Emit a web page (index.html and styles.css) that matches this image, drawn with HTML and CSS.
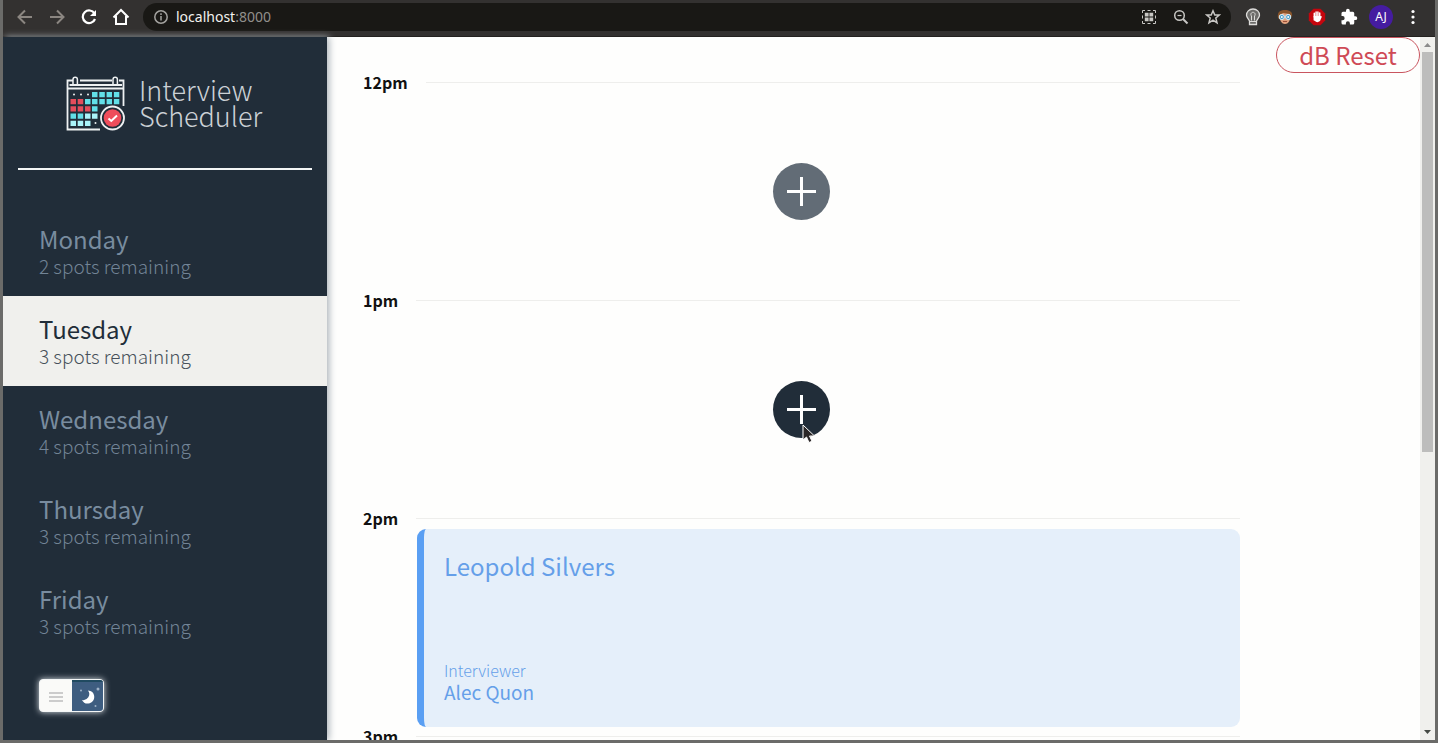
FILE: index.html
```
<!DOCTYPE html>
<html lang="en">
<head>
<meta charset="utf-8">
<title>Interview Scheduler</title>
<link rel="stylesheet" href="styles.css">
</head>
<body class="window">
<header class="toolbar">
  <button class="tool dim" aria-label="Back"><svg width="16" height="16" viewBox="0 0 16 16" fill="none" stroke="currentColor" stroke-width="2"><path d="M15 8H2M8 1.500L1.500 8L8 14.500"/></svg></button>
  <button class="tool dim" aria-label="Forward"><svg width="16" height="16" viewBox="0 0 16 16" fill="none" stroke="currentColor" stroke-width="2"><path d="M1 8H14M8 1.500L14.500 8L8 14.500"/></svg></button>
  <button class="tool" aria-label="Reload"><svg width="16" height="16" viewBox="0 0 16 16"><path d="M13.500 4.500A6.300 6.300 0 1 0 14 10" fill="none" stroke="currentColor" stroke-width="2.200"/><path d="M15 1V7H9Z" fill="currentColor"/></svg></button>
  <button class="tool" aria-label="Home"><svg width="18" height="18" viewBox="0 0 18 18" fill="none" stroke="currentColor" stroke-width="2"><path d="M1.500 9.500L9 2L16.500 9.500M4 8V16H14V8"/></svg></button>
  <div class="address">
    <svg width="14" height="14" viewBox="0 0 14 14" fill="none" stroke="#a3a29f" stroke-width="1.500"><circle cx="7" cy="7" r="6.200"/><path d="M7 6V10.500M7 3.300V5"/></svg>
    <p class="url">localhost<span class="port">:8000</span></p>
    <button class="tool pale" aria-label="Apps"><svg width="16" height="16" viewBox="0 0 16 16"><path d="M1.500 4V1.500H4M6.500 1.500H9.500M12 1.500H14.500V4M14.500 6.500V9.500M14.500 12V14.500H12M9.500 14.500H6.500M4 14.500H1.500V12M1.500 9.500V6.500" fill="none" stroke="currentColor"/><path d="M3.800 3.800H7.600V7.600H3.800ZM8.400 3.800H12.200V7.600H8.400ZM3.800 8.400H7.600V12.200H3.800ZM8.400 8.400H12.200V12.200H8.400Z" fill="currentColor"/></svg></button>
    <button class="tool pale" aria-label="Zoom"><svg width="16" height="16" viewBox="0 0 16 16" fill="none" stroke="currentColor"><circle cx="6.500" cy="6.500" r="4.800" stroke-width="1.500"/><path d="M10 10L14.500 14.500" stroke-width="2"/><path d="M4.500 6.500H8.500" stroke-width="1.200"/></svg></button>
    <button class="tool pale" aria-label="Bookmark"><svg width="16" height="16" viewBox="0 0 16 16" fill="none" stroke="currentColor" stroke-width="1.500"><path d="M8 1.800L9.800 6H14.300L10.800 9L12 13.800L8 11.200L4 13.800L5.200 9L1.700 6H6.200Z"/></svg></button>
  </div>
  <button class="tool" aria-label="Lightbulb"><svg width="16" height="18" viewBox="0 0 16 18"><path d="M8 1C4 1 1.500 4 1.500 7.200C1.500 9.500 4 11.200 4.500 13V16.500H11.500V13C12 11.200 14.500 9.500 14.500 7.200C14.500 4 12 1 8 1Z" fill="#6d6c6a" stroke="#dddcda" stroke-width="1.300"/><path d="M6.500 12.500V8C5 6 6.500 4.300 8 4.300S11 6 9.500 8V12.500M4.500 13.500H11.500" fill="none" stroke="#dddcda"/></svg></button>
  <button class="tool" aria-label="Avatar"><svg width="16" height="16" viewBox="0 0 16 16"><path d="M2.500 7C2.500 10 4 15 8 15S13.500 10 13.500 7V4H2.500Z" fill="#dfa17e"/><path d="M1 9C0 3 3 1 8 1S16 3 15 8L12.500 5L6 4L3 6V11Z" fill="#8a552b"/><circle cx="4.800" cy="8" r="2.600" fill="#4f9fc9" stroke="#d9f1fb"/><circle cx="11.200" cy="8" r="2.600" fill="#4f9fc9" stroke="#d9f1fb"/><circle cx="4.800" cy="8" r="1" fill="#fff"/><circle cx="11.200" cy="8" r="1" fill="#fff"/><path d="M6 12.500H10" stroke="#9b4e37"/></svg></button>
  <button class="tool" aria-label="Blocker"><svg width="18" height="18" viewBox="0 0 18 18"><path d="M5.500 .800H12.500L17.200 5.500V12.500L12.500 17.200H5.500L.800 12.500V5.500Z" fill="#c5060e"/><path d="M6.300 12V5.300M8.100 9V3.900M9.900 9V3.900M11.700 10V5" stroke="#fff" stroke-width="1.500" stroke-linecap="round"/><path d="M5.500 8H12.400L14 8.500L12 13Q9 15.500 6.500 12.500Z" fill="#fff"/></svg></button>
  <button class="tool" aria-label="Extensions"><svg width="18" height="18" viewBox="0 0 24 24"><path fill="currentColor" d="M20.500 11H19V7a2 2 0 0 0-2-2h-4V3.500a2.500 2.500 0 0 0-5 0V5H4a2 2 0 0 0-2 2v3.800h1.500a2.700 2.700 0 0 1 0 5.400H2V20a2 2 0 0 0 2 2h3.800v-1.500a2.700 2.700 0 0 1 5.400 0V22H17a2 2 0 0 0 2-2v-4h1.500a2.500 2.500 0 0 0 0-5Z"/></svg></button>
  <button class="tool profile">AJ</button>
  <button class="tool" aria-label="Menu"><svg width="4" height="16" viewBox="0 0 4 16" fill="currentColor"><circle cx="2" cy="2.500" r="1.600"/><circle cx="2" cy="8" r="1.600"/><circle cx="2" cy="13.500" r="1.600"/></svg></button>
</header>
<div class="page">
  <aside class="sidebar">
    <div class="brand">
      <svg width="60" height="56" viewBox="0 0 60 56">
        <g fill="none" stroke="#eef1f2" stroke-width="1.800">
          <path d="M7 4.500H1.500V53.500H34M14 4.500H46M53 4.500H57.500V30M1.500 12.500H57.500M3.500 9H56"/>
          <path d="M7 8V3.500A2.200 2.200 0 0 1 11.400 3.500V8M47 8V3.500A2.200 2.200 0 0 1 51.400 3.500V8" stroke-width="1.500"/>
        </g>
        <g fill="#eef1f2"><circle cx="8" cy="18.500" r="1"/><circle cx="15" cy="18.500" r="1"/><circle cx="22" cy="18.500" r="1"/><circle cx="29.500" cy="47" r="1"/></g>
        <path d="M26 16H31.500V21.200H26ZM33.300 16H38.800V21.200H33.300ZM40.600 16H46V21.200H40.600ZM47.900 16H53.300V21.200H47.900ZM19 23H24.500V28.200H19ZM26 23H31.500V28.200H26ZM33.300 23H38.800V28.200H33.300ZM40.600 23H46V28.200H40.600ZM47.900 23H53.300V28.200H47.900ZM26 30.200H31.500V35.500H26ZM4.500 37.500H10V42.800H4.500ZM11.700 37.500H17.200V42.800H11.700Z" fill="#62dfe8"/>
        <path d="M4.500 23H10V28.200H4.500ZM11.700 23H17.200V28.200H11.700ZM4.500 30.200H10V35.500H4.500ZM11.700 30.200H17.200V35.500H11.700ZM19 30.200H24.500V35.500H19Z" fill="#e44d5c"/>
        <path d="M19 37.500H24.500V42.800H19ZM26 37.500H31.500V42.800H26ZM4.500 44.700H10V50H4.500ZM11.700 44.700H17.200V50H11.700ZM19 44.700H24.500V50H19Z" fill="#aaf4fa"/>
        <circle cx="46.500" cy="42" r="11.500" fill="#212d39" stroke="#eef1f2" stroke-width="1.800"/><circle cx="46.500" cy="42" r="8.800" fill="#ee4d5b"/>
        <path d="M42.500 42.500L45.300 45L51 39.500" fill="none" stroke="#fff" stroke-width="2"/>
      </svg>
      <p class="brand-name">Interview<br>Scheduler</p>
    </div>
    <hr class="divider">
    <nav class="days">
      <a class="day" href="#"><span class="day-name">Monday</span><span class="spots">2 spots remaining</span></a>
      <a class="day selected" href="#"><span class="day-name">Tuesday</span><span class="spots">3 spots remaining</span></a>
      <a class="day" href="#"><span class="day-name">Wednesday</span><span class="spots">4 spots remaining</span></a>
      <a class="day" href="#"><span class="day-name">Thursday</span><span class="spots">3 spots remaining</span></a>
      <a class="day" href="#"><span class="day-name">Friday</span><span class="spots">3 spots remaining</span></a>
    </nav>
    <button class="theme" aria-label="Night mode">
      <span class="grip"><svg width="14" height="12" viewBox="0 0 14 12" stroke="#bdbdbd" stroke-width="1.300"><path d="M0 2H14M0 6H14M0 10H14"/></svg></span>
      <span class="night"><svg width="28" height="28" viewBox="0 0 28 28"><path d="M14 7.500A6.500 6.500 0 1 1 8 17A6 6 0 0 0 14 7.500Z" fill="#fff"/><g fill="#9fb2c7"><circle cx="24" cy="6" r="1.500"/><circle cx="7" cy="7.500" r="1"/><circle cx="21.500" cy="23" r="1"/></g></svg></span>
    </button>
  </aside>
  <main class="main">
    <section class="schedule">
      <article class="slot">
        <header class="hour"><h4 class="time">12pm</h4><hr class="rule"></header>
        <div class="empty"><button class="add" aria-label="Add appointment"><svg width="29" height="29" viewBox="0 0 29 29" stroke="#fff" stroke-width="3"><path d="M14.500 0V29M0 14.500H29"/></svg></button></div>
      </article>
      <article class="slot">
        <header class="hour"><h4 class="time">1pm</h4><hr class="rule"></header>
        <div class="empty"><button class="add active" aria-label="Add appointment"><svg width="29" height="29" viewBox="0 0 29 29" stroke="#fff" stroke-width="3"><path d="M14.500 0V29M0 14.500H29"/></svg><svg class="pointer" width="14" height="20" viewBox="0 0 14 20"><path d="M1 1V16L4.500 13L7 18.500L10 17.200L7.500 12H12.500Z" fill="#2a2626" stroke="#fff"/></svg></button></div>
      </article>
      <article class="slot">
        <header class="hour"><h4 class="time">2pm</h4><hr class="rule"></header>
        <div class="card">
          <h2 class="student">Leopold Silvers</h2>
          <div><h4 class="label">Interviewer</h4><h3 class="interviewer">Alec Quon</h3></div>
        </div>
      </article>
      <article class="slot">
        <header class="hour"><h4 class="time">3pm</h4><hr class="rule"></header>
      </article>
    </section>
    <button class="reset">dB Reset</button>
  </main>
  <div class="scrollbar">
    <svg width="15" height="15" viewBox="0 0 15 15"><path d="M4 10H11L7.500 6Z" fill="#8b8b8b"/></svg>
    <div class="thumb"></div>
    <svg width="15" height="15" viewBox="0 0 15 15"><path d="M4 5H11L7.500 9Z" fill="#454a45"/></svg>
  </div>
</div>
</body>
</html>
```
FILE: styles.css
```
* { box-sizing: border-box; margin: 0; padding: 0; }

.window {
  display: flex;
  flex-direction: column;
  height: 100vh;
  overflow: hidden;
  border: solid #6b6b69;
  border-width: 0 3px 3px;
  background: #fefefd;
  font-family: "Noto Sans CJK SC", "Noto Sans", sans-serif;
}

button { border: 0; background: none; font: inherit; cursor: pointer; }
svg { display: block; }

.toolbar {
  display: flex;
  flex: none;
  align-items: center;
  gap: 8px;
  height: 37px;
  padding: 0 10px 3px;
  background: #333130;
  border-bottom: 1px solid #242220;
}

.tool {
  display: flex;
  flex: none;
  align-items: center;
  justify-content: center;
  width: 24px;
  height: 24px;
  color: #fff;
}
.dim { color: #8b8681; }
.pale { color: #c8c7c4; }

.address {
  display: flex;
  flex: 1;
  align-items: center;
  gap: 8px;
  height: 28px;
  margin-left: 2px;
  margin-right: 2px;
  padding: 0 6px 0 11px;
  border-radius: 14px;
  background: #191815;
}
.url {
  flex: 1;
  color: #f2f1ef;
  font: 14px/20px "Noto Sans", sans-serif;
}
.port { color: #918f8b; }

.profile {
  border-radius: 50%;
  background: #451ca0;
  font: 12px/24px "Noto Sans", sans-serif;
}

.page { display: flex; flex: 1; min-height: 0; }

.sidebar {
  z-index: 1;
  flex: none;
  width: 324px;
  background: #212d39;
  box-shadow: 2px 0 7px #a9b1b8;
}

.brand {
  display: flex;
  align-items: center;
  gap: 13px;
  height: 131px;
  padding: 2px 0 0 63px;
}
.brand-name {
  padding-bottom: 2px;
  color: #ccd1d6;
  font-size: 27px;
  font-weight: 300;
  line-height: 26px;
}

.divider {
  height: 2px;
  margin: 0 15px;
  border: 0;
  background: #f3f5f5;
}

.days { margin-top: 36px; }
.day {
  display: flex;
  flex-direction: column;
  justify-content: center;
  height: 90px;
  padding-left: 36px;
  color: #798c9f;
  text-decoration: none;
}
.day-name { font-size: 24px; line-height: 30px; }
.spots { color: #728496; font-size: 19px; font-weight: 300; line-height: 24px; }
.selected { background: #f0f0ed; color: #212d39; }
.selected .spots { color: #47505a; }

.theme {
  display: flex;
  width: 65px;
  height: 33px;
  margin: 23px 0 0 36px;
  overflow: hidden;
  border: 1px solid #f4f6f6;
  border-radius: 4px;
  background: #fafaf8;
  box-shadow: 0 0 6px #dde3e8;
}
.grip { display: flex; flex: 1; align-items: center; justify-content: center; padding-top: 2px; }
.night {
  display: flex;
  align-items: center;
  justify-content: center;
  width: 31px;
  border-top: 2px solid #204a60;
  background: #3e5d80;
}

.main { display: flex; flex: 1; align-items: flex-start; min-width: 0; overflow: hidden; }
.schedule { flex: 1; padding: 35px 36px 0; }
.slot { height: 218px; }

.hour { display: flex; align-items: center; gap: 18px; height: 20px; }
.time { font-size: 16px; font-weight: 700; line-height: 20px; color: #111; }
.rule { flex: 1; height: 1px; border: 0; background: #eeeeec; }

.empty { display: flex; align-items: center; justify-content: center; height: 198px; }
.add {
  position: relative;
  display: flex;
  align-items: center;
  justify-content: center;
  width: 57px;
  height: 57px;
  border-radius: 50%;
  background: #626c76;
}
.active { background: #212d39; }
.pointer { position: absolute; left: 29px; top: 43px; }

.card {
  display: flex;
  flex-direction: column;
  justify-content: space-between;
  height: 198px;
  margin: 1px 0 0 54px;
  padding: 19px 20px 24px;
  border-left: 7px solid #5a9ff3;
  border-radius: 9px;
  background: #e5effa;
  color: #659fe9;
}
.student { font-size: 24px; font-weight: 400; line-height: 36px; }
.label { font-size: 16px; font-weight: 300; line-height: 22px; }
.interviewer { font-size: 19px; font-weight: 400; line-height: 22px; }

.reset {
  flex: none;
  width: 144px;
  height: 36px;
  border: 1px solid #c9555f;
  border-radius: 18px;
  color: #cf4a56;
  font-size: 24px;
  line-height: 34px;
}

.scrollbar {
  display: flex;
  flex-direction: column;
  align-items: center;
  justify-content: space-between;
  width: 15px;
  background: #f0f0ed;
}
.thumb { width: 11px; height: 400px; margin-bottom: auto; background: #bdbdbc; }
```
